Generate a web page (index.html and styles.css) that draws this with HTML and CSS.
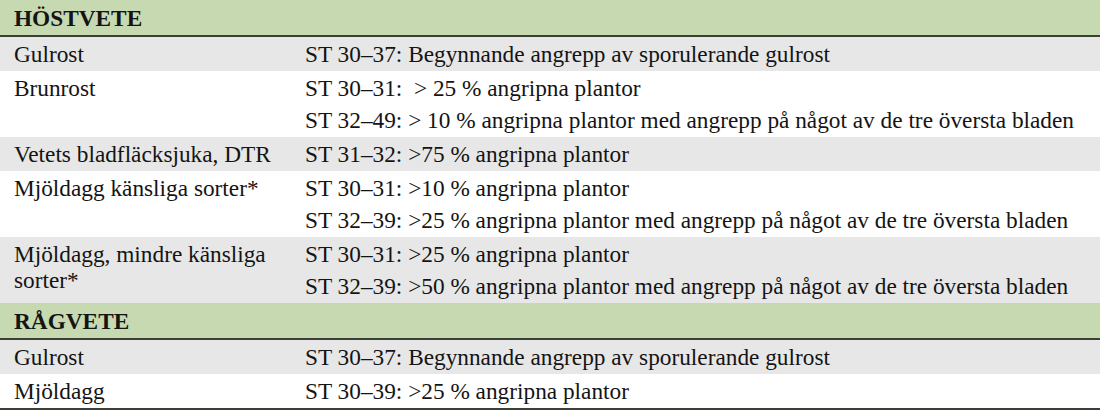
FILE: index.html
```html
<!DOCTYPE html>
<html lang="sv">
<head>
<meta charset="utf-8">
<title>Bekämpningströsklar</title>
<link rel="stylesheet" href="styles.css">
</head>
<body>
<div class="table">
  <div class="head">HÖSTVETE</div>
  <div class="row shade">
    <div class="name">Gulrost</div>
    <div class="crit"><p>ST 30–37: Begynnande angrepp av sporulerande gulrost</p></div>
  </div>
  <div class="row">
    <div class="name">Brunrost</div>
    <div class="crit"><p>ST 30–31: &nbsp;&gt; 25 % angripna plantor</p><p>ST 32–49: &gt; 10 % angripna plantor med angrepp på något av de tre översta bladen</p></div>
  </div>
  <div class="row shade">
    <div class="name">Vetets bladfläcksjuka, DTR</div>
    <div class="crit"><p>ST 31–32: &gt;75 % angripna plantor</p></div>
  </div>
  <div class="row">
    <div class="name">Mjöldagg känsliga sorter*</div>
    <div class="crit"><p>ST 30–31: &gt;10 % angripna plantor</p><p>ST 32–39: &gt;25 % angripna plantor med angrepp på något av de tre översta bladen</p></div>
  </div>
  <div class="row shade">
    <div class="name">Mjöldagg, mindre känsliga sorter*</div>
    <div class="crit"><p>ST 30–31: &gt;25 % angripna plantor</p><p>ST 32–39: &gt;50 % angripna plantor med angrepp på något av de tre översta bladen</p></div>
  </div>
  <div class="head">RÅGVETE</div>
  <div class="row shade">
    <div class="name">Gulrost</div>
    <div class="crit"><p>ST 30–37: Begynnande angrepp av sporulerande gulrost</p></div>
  </div>
  <div class="row">
    <div class="name">Mjöldagg</div>
    <div class="crit"><p>ST 30–39: &gt;25 % angripna plantor</p></div>
  </div>
</div>
</body>
</html>
```
FILE: styles.css
```css
html, body {
  margin: 0;
  padding: 0;
  background: #ffffff;
}
body {
  font-family: "Liberation Serif", "DejaVu Serif", serif;
  font-size: 23.3px;
  color: #141414;
}
.table {
  width: 1100px;
  border-bottom: 2px solid #3a4035;
}
.head {
  background: #c7d9b1;
  height: 35px;
  line-height: 36px;
  padding-left: 14px;
  font-weight: bold;
  border-bottom: 2px solid #3a4035;
}
.row {
  display: grid;
  grid-template-columns: 291px 1fr;
  padding: 1px 0 1px 14px;
  line-height: 26px;
}
.row.shade {
  background: #e7e7e7;
}
.name {
  padding: 3px 20px 0 0;
}
.crit p {
  margin: 0;
  padding: 3px 0;
  white-space: nowrap;
}
```
